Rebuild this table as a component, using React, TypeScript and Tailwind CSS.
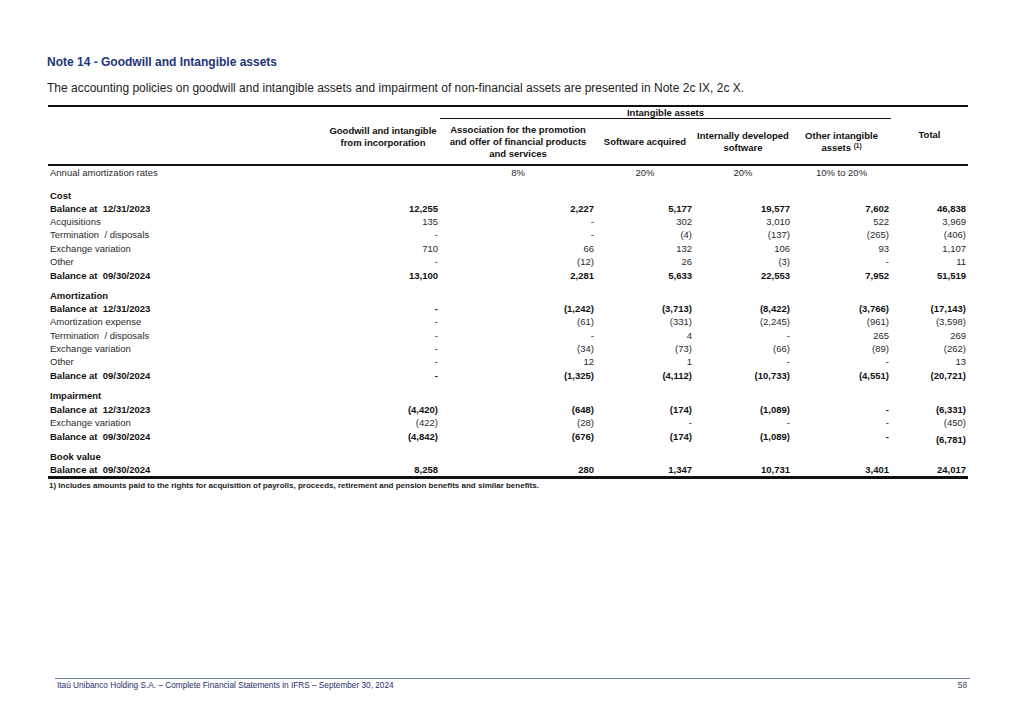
const FONT = "font-['Liberation_Sans',Arial,sans-serif]"

type Row = {
  label: string
  values?: string[]
  kind: 'head' | 'bold' | 'plain'
  first?: boolean
  last?: boolean
}

const SECTIONS: Row[][] = [
  [
    { label: 'Cost', kind: 'head', first: true },
    { label: 'Balance at  12/31/2023', kind: 'bold', values: ['12,255', '2,227', '5,177', '19,577', '7,602', '46,838'] },
    { label: 'Acquisitions', kind: 'plain', values: ['135', '-', '302', '3,010', '522', '3,969'] },
    { label: 'Termination  / disposals', kind: 'plain', values: ['-', '-', '(4)', '(137)', '(265)', '(406)'] },
    { label: 'Exchange variation', kind: 'plain', values: ['710', '66', '132', '106', '93', '1,107'] },
    { label: 'Other', kind: 'plain', values: ['-', '(12)', '26', '(3)', '-', '11'] },
    { label: 'Balance at  09/30/2024', kind: 'bold', last: true, values: ['13,100', '2,281', '5,633', '22,553', '7,952', '51,519'] },
  ],
  [
    { label: 'Amortization', kind: 'head' },
    { label: 'Balance at  12/31/2023', kind: 'bold', values: ['-', '(1,242)', '(3,713)', '(8,422)', '(3,766)', '(17,143)'] },
    { label: 'Amortization expense', kind: 'plain', values: ['-', '(61)', '(331)', '(2,245)', '(961)', '(3,598)'] },
    { label: 'Termination  / disposals', kind: 'plain', values: ['-', '-', '4', '-', '265', '269'] },
    { label: 'Exchange variation', kind: 'plain', values: ['-', '(34)', '(73)', '(66)', '(89)', '(262)'] },
    { label: 'Other', kind: 'plain', values: ['-', '12', '1', '-', '-', '13'] },
    { label: 'Balance at  09/30/2024', kind: 'bold', last: true, values: ['-', '(1,325)', '(4,112)', '(10,733)', '(4,551)', '(20,721)'] },
  ],
  [
    { label: 'Impairment', kind: 'head' },
    { label: 'Balance at  12/31/2023', kind: 'bold', values: ['(4,420)', '(648)', '(174)', '(1,089)', '-', '(6,331)'] },
    { label: 'Exchange variation', kind: 'plain', values: ['(422)', '(28)', '-', '-', '-', '(450)'] },
    { label: 'Balance at  09/30/2024', kind: 'bold', last: true, values: ['(4,842)', '(676)', '(174)', '(1,089)', '-', '(6,781)'] },
  ],
  [
    { label: 'Book value', kind: 'head' },
    { label: 'Balance at  09/30/2024', kind: 'bold', values: ['8,258', '280', '1,347', '10,731', '3,401', '24,017'] },
  ],
]

const GRID = 'grid grid-cols-[278px_114px_156px_98px_98px_99px_77px]'

function TableRow({ row }: { row: Row }) {
  const bold = row.kind !== 'plain'
  return (
    <div
      className={`${GRID} h-[13.3px] leading-[13.3px] ${bold ? 'font-bold text-[#111]' : 'text-[#2a2a2a]'} ${
        row.kind === 'head' ? (row.first ? 'mt-[9px]' : 'mt-[6.6px]') : ''
      } ${row.last ? 'mt-[0.7px]' : ''}`}
    >
      <div className="pl-[2px] whitespace-pre">{row.label}</div>
      {row.values?.map((v, i) => (
        <div key={i} className={`text-right pr-[2px] ${v === '(6,781)' ? 'mt-[3px]' : ''}`}>
          {v}
        </div>
      ))}
    </div>
  )
}

export default function App() {
  return (
    <div className={`${FONT} h-[720px] w-[1019px] bg-white flex flex-col text-[#222]`}>
      <div className="pl-[47px] pt-[54px]">
        {/* Título */}
        <h1 className="text-[12px] leading-[16px] font-bold text-[#1c3678]">
          Note 14 - Goodwill and Intangible assets
        </h1>
        <p className="mt-[10px] text-[12px] leading-[16px] text-[#222]">
          The accounting policies on goodwill and intangible assets and impairment of non-financial assets are
          presented in Note 2c IX, 2c X.
        </p>

        {/* Tabela */}
        <div className="mt-[9px] ml-px w-[920px] text-[9.5px]">
          <div className="h-[2px] bg-[#111]" />

          {/* Cabeçalho */}
          <div className={`${GRID} font-bold text-[#111]`}>
            <div className="row-span-2" />
            <div className="row-span-2 pt-[18px] text-center leading-[11.5px]">
              <div>Goodwill and intangible</div>
              <div>from incorporation</div>
            </div>
            <div className="col-span-4 h-[12px] leading-[12px] text-center border-b-[1.5px] border-[#111]">
              Intangible assets
            </div>
            <div className="row-span-2 pt-[22px] text-center leading-[12px]">Total</div>
            <div className="h-[45px] flex flex-col items-center justify-center pt-[1px] text-center leading-[12px]">
              <div>Association for the promotion</div>
              <div>and offer of financial products</div>
              <div>and services</div>
            </div>
            <div className="flex flex-col items-center justify-center text-center leading-[12px]">
              <div>Software acquired</div>
            </div>
            <div className="flex flex-col items-center justify-center text-center leading-[12px]">
              <div>Internally developed</div>
              <div>software</div>
            </div>
            <div className="flex flex-col items-center justify-center text-center leading-[12px]">
              <div>Other intangible</div>
              <div>
                assets <span className="text-[6.5px] leading-none align-[3px]">(1)</span>
              </div>
            </div>
          </div>

          <div className="h-[2px] bg-[#111]" />

          {/* Taxas */}
          <div className={`${GRID} h-[13.5px] leading-[13.5px] text-[#2a2a2a]`}>
            <div className="pl-[2px]">Annual amortization rates</div>
            <div />
            <div className="text-center">8%</div>
            <div className="text-center">20%</div>
            <div className="text-center">20%</div>
            <div className="text-center">10% to 20%</div>
            <div />
          </div>

          {SECTIONS.map((section, si) => (
            <div key={si}>
              {section.map((row, ri) => (
                <TableRow key={ri} row={row} />
              ))}
            </div>
          ))}

          <div className="h-[2.5px] bg-[#111]" />
          <p className="mt-[2px] pl-[1px] text-[8px] leading-[10px] font-bold text-[#222]">
            1) Includes amounts paid to the rights for acquisition of payrolls, proceeds, retirement and pension benefits
            and similar benefits.
          </p>
        </div>
      </div>

      {/* Stopka */}
      <div className="mt-auto ml-[55px] mr-[49px] pb-[29px]">
        <div className="h-[1.5px] bg-[#6f7fa3]" />
        <div className="mt-[2px] flex justify-between text-[8.25px] leading-[10px]">
          <span className="pl-[2px] text-[#1c2f66]">
            Itaú Unibanco Holding S.A. – Complete Financial Statements in IFRS – September 30, 2024
          </span>
          <span className="pr-[3px] text-[#3b4668]">58</span>
        </div>
      </div>
    </div>
  )
}
